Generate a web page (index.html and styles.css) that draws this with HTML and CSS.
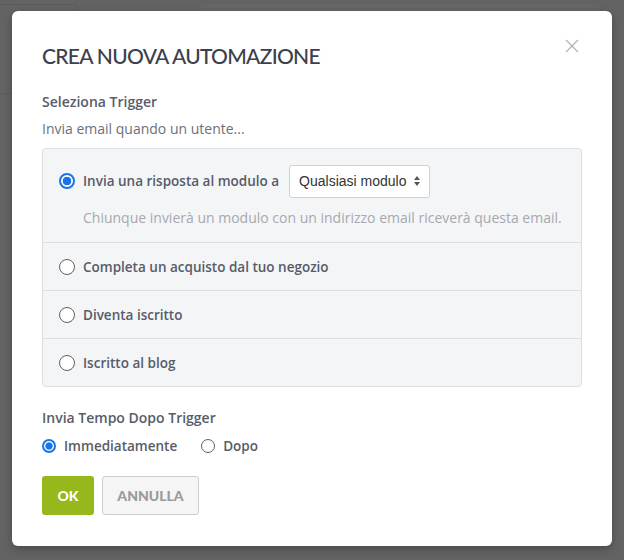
FILE: index.html
```html
<!DOCTYPE html>
<html lang="it">
<head>
    <meta charset="UTF-8">
    <meta name="viewport" content="width=device-width, initial-scale=1.0">
    <title>Crea nuova automazione</title>
    <link rel="stylesheet" href="styles.css">
</head>
<body>
    <div class="backdrop">
        <div class="ghost ghost-tab"></div>
        <div class="ghost ghost-bar"></div>
    </div>

    <div class="modal">
        <button class="close-btn" aria-label="Chiudi">
            <svg width="14" height="14" viewBox="0 0 14 14">
                <path d="M1 1 L13 13 M13 1 L1 13" stroke="#b3b3b3" stroke-width="1.3" fill="none"/>
            </svg>
        </button>

        <h1 class="modal-title">CREA NUOVA AUTOMAZIONE</h1>

        <div class="section-label">Seleziona Trigger</div>
        <div class="section-hint">Invia email quando un utente...</div>

        <div class="trigger-list">
            <label class="trigger-row trigger-first">
                <div class="trigger-main">
                    <input type="radio" name="trigger" class="radio" checked>
                    <span class="trigger-text">Invia una risposta al modulo a</span>
                    <div class="select-box">
                        <span>Qualsiasi modulo</span>
                        <svg width="8" height="12" viewBox="0 0 8 12">
                            <path d="M4 1 L7 5 L1 5 Z M4 11 L7 7 L1 7 Z" fill="#555"/>
                        </svg>
                    </div>
                </div>
                <div class="trigger-desc">Chiunque invierà un modulo con un indirizzo email riceverà questa email.</div>
            </label>
            <label class="trigger-row">
                <div class="trigger-main">
                    <input type="radio" name="trigger" class="radio">
                    <span class="trigger-text">Completa un acquisto dal tuo negozio</span>
                </div>
            </label>
            <label class="trigger-row">
                <div class="trigger-main">
                    <input type="radio" name="trigger" class="radio">
                    <span class="trigger-text">Diventa iscritto</span>
                </div>
            </label>
            <label class="trigger-row">
                <div class="trigger-main">
                    <input type="radio" name="trigger" class="radio">
                    <span class="trigger-text">Iscritto al blog</span>
                </div>
            </label>
        </div>

        <div class="section-label timing-label">Invia Tempo Dopo Trigger</div>
        <div class="timing-options">
            <label class="timing-option">
                <input type="radio" name="timing" class="radio radio-small" checked>
                <span>Immediatamente</span>
            </label>
            <label class="timing-option">
                <input type="radio" name="timing" class="radio radio-small">
                <span>Dopo</span>
            </label>
        </div>

        <div class="actions">
            <button class="ok-btn">OK</button>
            <button class="cancel-btn">ANNULLA</button>
        </div>
    </div>
</body>
</html>
```

FILE: styles.css
```css
* {
    margin: 0;
    padding: 0;
    box-sizing: border-box;
}

body {
    font-family: "Open Sans", Arial, sans-serif;
    background: #636363;
    height: 560px;
    padding: 11px 12px;
    position: relative;
    overflow: hidden;
}

/* dimmed page behind the dialog */
.backdrop {
    position: absolute;
    inset: 0;
}

.ghost {
    position: absolute;
    border: 1px solid #5b5b5b;
    border-radius: 4px;
}

.ghost-tab {
    left: -4px;
    top: 4px;
    width: 82px;
    height: 90px;
}

.ghost-bar {
    left: 200px;
    top: 4px;
    width: 400px;
    height: 20px;
    border-color: #676767;
    background: #666;
}

.modal {
    position: relative;
    width: 600px;
    height: 535px;
    background: #fff;
    border-radius: 6px;
    box-shadow: 0 3px 8px rgba(0, 0, 0, 0.25);
    padding: 30px 30px 0 30px;
}

.close-btn {
    position: absolute;
    top: 28px;
    right: 33px;
    background: none;
    border: none;
    cursor: pointer;
    line-height: 0;
}

.modal-title {
    font-family: Lato, sans-serif;
    font-weight: 500;
    font-size: 21px;
    color: #3b404c;
    letter-spacing: -0.7px;
    line-height: 30px;
}

.section-label {
    font-weight: 600;
    font-size: 14px;
    color: #575c68;
    margin-top: 21px;
    line-height: 20px;
}

.section-hint {
    font-size: 14px;
    color: #6c707a;
    margin-top: 7px;
    line-height: 20px;
}

.trigger-list {
    margin-top: 9px;
    background: #f4f5f7;
    border: 1px solid #dcdee2;
    border-radius: 4px;
}

.trigger-row {
    display: block;
    border-top: 1px solid #dcdee2;
    padding: 0 16px;
    height: 48px;
    cursor: pointer;
}

.trigger-row.trigger-first {
    border-top: none;
    height: 93px;
    padding-top: 15px;
}

.trigger-main {
    display: flex;
    align-items: center;
    height: 47px;
}

.trigger-first .trigger-main {
    height: 34px;
}

.radio {
    appearance: none;
    width: 16px;
    height: 16px;
    border: 1px solid #5f5f5f;
    border-radius: 50%;
    background: #fff;
    margin-right: 8px;
    flex-shrink: 0;
}

.radio:checked {
    border: 2px solid #1a73e8;
    background: radial-gradient(circle, #1a73e8 0 4px, #fff 4.6px);
}

.radio-small {
    width: 14px;
    height: 14px;
}

.radio-small:checked {
    background: radial-gradient(circle, #1a73e8 0 3.3px, #fff 4px);
}

.trigger-text {
    font-weight: 600;
    font-size: 13.5px;
    color: #575c68;
}

.select-box {
    display: flex;
    align-items: center;
    gap: 6px;
    margin-left: 10px;
    height: 33px;
    padding: 0 8px 0 9px;
    background: #fff;
    border: 1px solid #cfd1d5;
    border-radius: 3px;
    font-family: "Liberation Sans", Arial, sans-serif;
    font-size: 14px;
    color: #333;
}

.trigger-desc {
    font-size: 14px;
    color: #a6a9ae;
    margin-left: 24px;
    margin-top: 10px;
    line-height: 20px;
}

.timing-label {
    margin-top: 21px;
}

.timing-options {
    display: flex;
    gap: 24px;
    margin-top: 8px;
}

.timing-option {
    display: flex;
    align-items: center;
    font-weight: 600;
    font-size: 13.5px;
    color: #575c68;
    line-height: 20px;
}

.actions {
    display: flex;
    gap: 8px;
    margin-top: 20px;
}

.ok-btn,
.cancel-btn {
    font-family: Lato, sans-serif;
    font-weight: 900;
    font-size: 14px;
    height: 39px;
    border-radius: 3px;
    cursor: pointer;
}

.ok-btn {
    width: 52px;
    background: #97b81c;
    color: #fff;
    border: none;
}

.cancel-btn {
    width: 97px;
    background: #f5f5f5;
    color: #9a9a9a;
    border: 1px solid #cdcdcd;
}
```
